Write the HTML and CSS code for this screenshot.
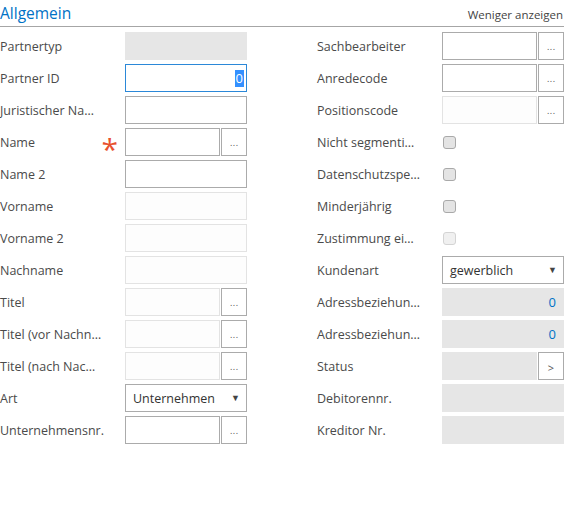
FILE: index.html
```html
<!DOCTYPE html>
<html>
<head>
<meta charset="utf-8">
<link rel="stylesheet" href="styles.css">
</head>
<body>
<div class="section">
  <div class="header">
    <span class="title">Allgemein</span>
    <span class="toggle">Weniger anzeigen</span>
  </div>
  <div class="form">
    <div class="label">Partnertyp</div>
    <div class="field"><div class="box ro"></div></div>
    <div></div>
    <div class="label">Sachbearbeiter</div>
    <div class="field"><div class="box"></div><div class="btn">...</div></div>

    <div class="label">Partner ID</div>
    <div class="field"><div class="box focus"><span class="sel">0</span></div></div>
    <div></div>
    <div class="label">Anredecode</div>
    <div class="field"><div class="box"></div><div class="btn">...</div></div>

    <div class="label">Juristischer Na…</div>
    <div class="field"><div class="box"></div></div>
    <div></div>
    <div class="label">Positionscode</div>
    <div class="field"><div class="box dis"></div><div class="btn">...</div></div>

    <div class="label">Name<span class="req">*</span></div>
    <div class="field"><div class="box"></div><div class="btn">...</div></div>
    <div></div>
    <div class="label">Nicht segmenti…</div>
    <div class="field"><span class="check"></span></div>

    <div class="label">Name 2</div>
    <div class="field"><div class="box"></div></div>
    <div></div>
    <div class="label">Datenschutzspe…</div>
    <div class="field"><span class="check"></span></div>

    <div class="label">Vorname</div>
    <div class="field"><div class="box dis"></div></div>
    <div></div>
    <div class="label">Minderjährig</div>
    <div class="field"><span class="check"></span></div>

    <div class="label">Vorname 2</div>
    <div class="field"><div class="box dis"></div></div>
    <div></div>
    <div class="label">Zustimmung ei…</div>
    <div class="field"><span class="check off"></span></div>

    <div class="label">Nachname</div>
    <div class="field"><div class="box dis"></div></div>
    <div></div>
    <div class="label">Kundenart</div>
    <div class="field"><div class="box select"><span>gewerblich</span><span class="arrow">▼</span></div></div>

    <div class="label">Titel</div>
    <div class="field"><div class="box dis"></div><div class="btn">...</div></div>
    <div></div>
    <div class="label">Adressbeziehun…</div>
    <div class="field"><div class="box ro num">0</div></div>

    <div class="label">Titel (vor Nachn…</div>
    <div class="field"><div class="box dis"></div><div class="btn">...</div></div>
    <div></div>
    <div class="label">Adressbeziehun…</div>
    <div class="field"><div class="box ro num">0</div></div>

    <div class="label">Titel (nach Nac…</div>
    <div class="field"><div class="box dis"></div><div class="btn">...</div></div>
    <div></div>
    <div class="label">Status</div>
    <div class="field"><div class="box ro"></div><div class="btn arrowbtn">&gt;</div></div>

    <div class="label">Art</div>
    <div class="field"><div class="box select"><span>Unternehmen</span><span class="arrow">▼</span></div></div>
    <div></div>
    <div class="label">Debitorennr.</div>
    <div class="field"><div class="box ro"></div></div>

    <div class="label">Unternehmensnr.</div>
    <div class="field"><div class="box"></div><div class="btn">...</div></div>
    <div></div>
    <div class="label">Kreditor Nr.</div>
    <div class="field"><div class="box ro"></div></div>
  </div>
</div>
</body>
</html>
```
FILE: styles.css
```css
html, body {
  margin: 0;
  padding: 0;
  background: #fff;
}
body {
  font-family: "Open Sans", "Noto Sans", sans-serif;
  color: #444;
  width: 564px;
}
.header {
  display: flex;
  justify-content: space-between;
  align-items: flex-end;
  height: 26px;
  border-bottom: 1px solid #a6a6a6;
  box-sizing: content-box;
}
.title {
  font-size: 15.5px;
  color: #0072c6;
  line-height: 20px;
  padding-bottom: 3px;
}
.toggle {
  font-size: 11.5px;
  color: #444;
  line-height: 16px;
  padding-bottom: 3px;
  padding-right: 1px;
}
.form {
  display: grid;
  grid-template-columns: 125px 122px 70px 125px 122px;
  grid-auto-rows: 28px;
  row-gap: 4px;
  padding-top: 5px;
}
.label {
  display: flex;
  align-items: center;
  justify-content: space-between;
  font-size: 12.5px;
  color: #4a4a4a;
  white-space: nowrap;
  padding-right: 7px;
}
.req {
  color: #e8512e;
  font-size: 30px;
  line-height: 1;
  height: 20px;
  margin-top: 4px;
}
.field {
  display: flex;
  align-items: center;
  gap: 1px;
}
.box {
  flex: 1;
  height: 28px;
  box-sizing: border-box;
  border: 1px solid #ababab;
  background: #fff;
  display: flex;
  align-items: center;
}
.box.ro {
  background: #e6e6e6;
  border-color: #e6e6e6;
}
.box.dis {
  background: #fdfdfd;
  border-color: #e3e3e3;
}
.box.focus {
  border-color: #2b88d8;
  justify-content: flex-end;
  padding-right: 2px;
}
.sel {
  background: #3390ff;
  color: #fff;
  font-size: 13px;
  line-height: 17px;
  padding: 0 1px;
}
.box.num {
  justify-content: flex-end;
  padding-right: 7px;
  color: #0072c6;
  font-size: 13px;
}
.box.select {
  justify-content: space-between;
  padding: 0 6px 0 7px;
  font-size: 12.5px;
  color: #333;
}
.arrow {
  font-size: 9px;
  color: #444;
  margin-top: -2px;
}
.btn {
  width: 26px;
  height: 28px;
  box-sizing: border-box;
  border: 1px solid #ababab;
  background: #fff;
  display: flex;
  align-items: flex-end;
  justify-content: center;
  font-family: "DejaVu Sans", sans-serif;
  font-size: 9px;
  color: #666;
  line-height: 1;
  padding-bottom: 7px;
}
.btn.arrowbtn {
  align-items: center;
  padding-bottom: 0;
  padding-top: 2px;
  font-family: "Open Sans", sans-serif;
  font-size: 11px;
  color: #555;
}
.check {
  display: block;
  width: 11px;
  height: 11px;
  margin-left: 1px;
  border: 1px solid #a9a9a9;
  border-radius: 3px;
  background: #e4e4e4;
}
.check.off {
  border-color: #d4d4d4;
  background: #f0f0f0;
}
```
